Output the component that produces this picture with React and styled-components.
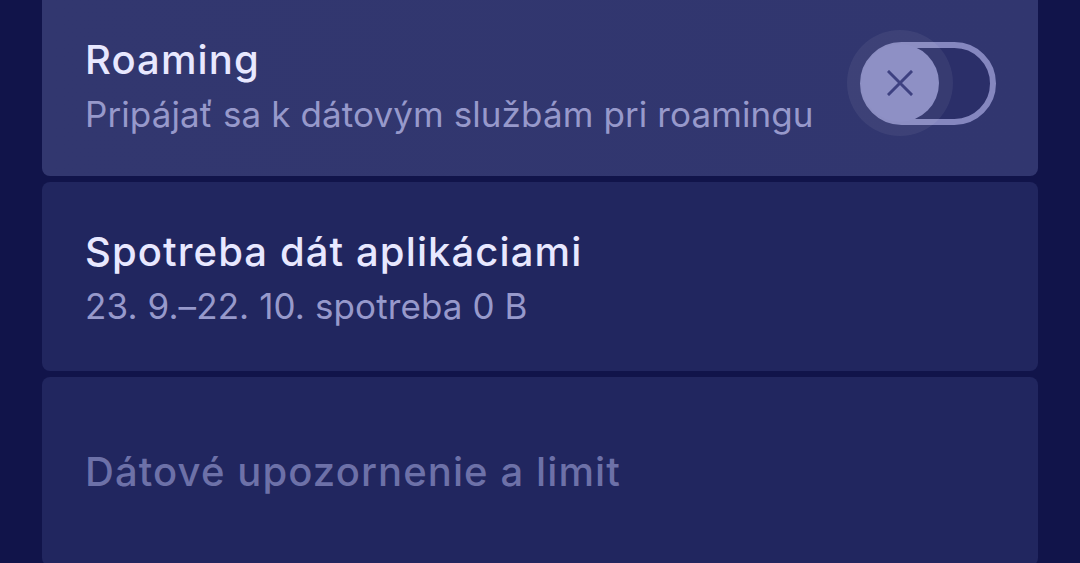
import React, { useState } from 'react';
import styled, { createGlobalStyle } from 'styled-components';

const GlobalStyle = createGlobalStyle`
  html, body {
    margin: 0;
    padding: 0;
    background: #11144a;
    overflow: hidden;
  }
  body {
    font-family: Inter, "Open Sans", sans-serif;
    -webkit-font-smoothing: antialiased;
  }
`;

const Page = styled.div`
  width: 1080px;
  height: 563px;
  overflow: hidden;
  background: #11144a;
  padding: 0 42px;
  box-sizing: border-box;
`;

const List = styled.div`
  display: flex;
  flex-direction: column;
  gap: 6px;
  margin-top: -10px;
`;

const Card = styled.div`
  display: flex;
  align-items: center;
  justify-content: space-between;
  height: ${props => props.h || 189}px;
  padding: 0 42px 0 43px;
  box-sizing: border-box;
  border-radius: 8px;
  background: ${props => props.active ? 'linear-gradient(90deg, #32376f 0%, #31366f 100%)' : '#21265f'};
`;

const Texts = styled.div`
  display: flex;
  flex-direction: column;
  padding-top: ${props => props.pad || 0}px;
`;

const Title = styled.div`
  font-size: 40px;
  font-weight: 500;
  line-height: 52px;
  letter-spacing: 1.1px;
  color: ${props => props.disabled ? '#6d71a8' : '#e8e8ff'};
`;

const Subtitle = styled.div`
  font-size: 35px;
  font-weight: 400;
  line-height: 56px;
  letter-spacing: 0.1px;
  color: #9799cb;
`;

const SwitchWrap = styled.button`
  position: relative;
  width: 136px;
  height: 83px;
  padding: 0;
  border: 6px solid #8587bf;
  border-radius: 42px;
  background: #2b2f69;
  box-sizing: border-box;
  cursor: pointer;
  flex-shrink: 0;
`;

const Halo = styled.span`
  position: absolute;
  left: ${props => props.on ? 42 : -19}px;
  top: 50%;
  width: 106px;
  height: 106px;
  margin-top: -53px;
  border-radius: 50%;
  background: rgba(255, 255, 255, 0.06);
`;

const Thumb = styled.span`
  position: absolute;
  left: ${props => props.on ? 56 : -5}px;
  top: 50%;
  width: 78px;
  height: 78px;
  margin-top: -39px;
  border-radius: 50%;
  background: #8e90c5;
  display: flex;
  align-items: center;
  justify-content: center;
`;

const XIcon = () => (
  <svg width="26" height="26" viewBox="0 0 26 26" fill="none">
    <path d="M2 2 L24 24 M24 2 L2 24" stroke="#3e4181" strokeWidth="3" strokeLinecap="square" />
  </svg>
);

const Switch = () => {
  const [on, setOn] = useState(false);
  return (
    <SwitchWrap onClick={() => setOn(!on)}>
      <Halo on={on ? 1 : 0} />
      <Thumb on={on ? 1 : 0}>
        <XIcon />
      </Thumb>
    </SwitchWrap>
  );
};

const App = () => {
  return (
    <>
      <GlobalStyle />
      <Page>
        <List>
          <Card active h={186}>
            <Texts pad={10}>
              <Title>Roaming</Title>
              <Subtitle>Pripájať sa k dátovým službám pri roamingu</Subtitle>
            </Texts>
            <Switch />
          </Card>
          <Card>
            <Texts pad={6}>
              <Title>Spotreba dát aplikáciami</Title>
              <Subtitle>23. 9.–22. 10. spotreba 0 B</Subtitle>
            </Texts>
          </Card>
          <Card>
            <Texts>
              <Title disabled>Dátové upozornenie a limit</Title>
            </Texts>
          </Card>
        </List>
      </Page>
    </>
  );
};

export default App;
